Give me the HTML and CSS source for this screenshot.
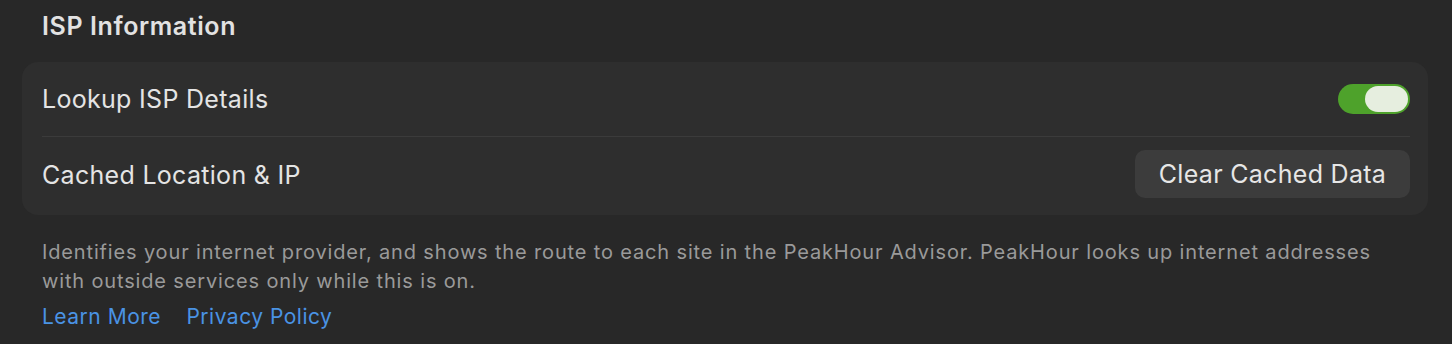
FILE: index.html
```html
<!DOCTYPE html>
<html>
<head>
	<title>ISP Information</title>
	<link rel="stylesheet" href="styles.css">
</head>
<body>
	<div class="section">
		<h2 class="judul">ISP Information</h2>

		<div class="card">
			<div class="row rowAtas">
				<span class="label">Lookup ISP Details</span>
				<div class="toggle on"><div class="knob"></div></div>
			</div>
			<div class="garis"></div>
			<div class="row rowBawah">
				<span class="label">Cached Location &amp; IP</span>
				<button class="tombol" type="button">Clear Cached Data</button>
			</div>
		</div>

		<p class="keterangan">Identifies your internet provider, and shows the route to each site in the PeakHour Advisor. PeakHour looks up internet addresses with outside services only while this is on.</p>
		<div class="links">
			<a href="#">Learn More</a>
			<a href="#">Privacy Policy</a>
		</div>
	</div>
</body>
</html>
```

FILE: styles.css
```css
body{
	margin: 0;
	background-color: #282828;
	font-family: Inter, "Noto Sans", sans-serif;
	color: #e4e4e4;
}

.section{
	padding: 0 24px 0 22px;
}

.judul{
	margin: 0;
	padding: 10px 0 0 20px;
	height: 62px;
	box-sizing: border-box;
	font-size: 25px;
	font-weight: 600;
	line-height: 32px;
	letter-spacing: 0.6px;
	color: #e2e2e2;
}

.card{
	background: #2e2e2e;
	border-radius: 16px;
	padding: 0 18px 0 20px;
}

.row{
	display: flex;
	align-items: center;
	justify-content: space-between;
}
.rowAtas{
	height: 74px;
}
.rowBawah{
	height: 78px;
}
.rowBawah .label{
	margin-bottom: 3px;
}

.label{
	font-size: 25px;
	letter-spacing: 0.3px;
}

.garis{
	height: 1px;
	background: #3b3b3b;
}

.toggle{
	width: 72px;
	height: 30px;
	border-radius: 15px;
	background: #4ea22b;
	box-sizing: border-box;
	padding: 2px;
	display: flex;
	justify-content: flex-end;
}
.knob{
	width: 43px;
	height: 26px;
	border-radius: 13px;
	background: #e6eedf;
}

.tombol{
	width: 275px;
	height: 48px;
	margin-bottom: 4px;
	border: none;
	border-radius: 10px;
	background: #3c3c3c;
	color: #e6e6e6;
	font-family: Inter, "Noto Sans", sans-serif;
	font-size: 25px;
	letter-spacing: 0.3px;
}

.keterangan{
	margin: 23px 0 0 20px;
	font-size: 20px;
	line-height: 29px;
	letter-spacing: 0.85px;
	color: #9a9a9a;
	max-width: 1345px;
}

.links{
	margin: 6px 0 0 20px;
	font-size: 21px;
	line-height: 29px;
	letter-spacing: 0.5px;
}
.links a{
	color: #4a93e4;
	text-decoration: none;
	margin-right: 19px;
}
```
